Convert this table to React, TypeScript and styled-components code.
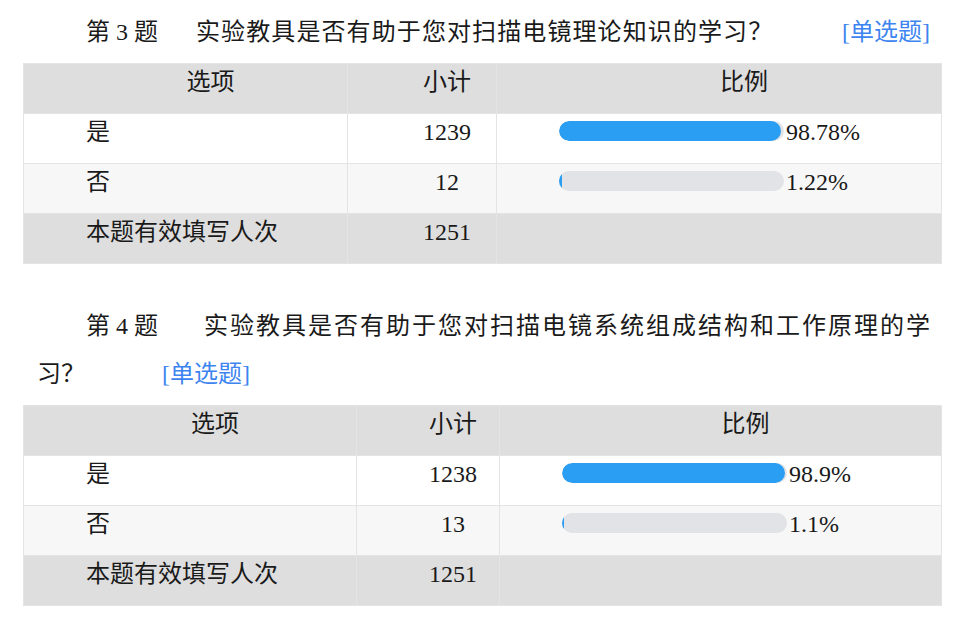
import React from 'react';
import styled, { createGlobalStyle } from 'styled-components';

const GlobalStyle = createGlobalStyle`
    body {
        margin: 0;
        background: #ffffff;
        color: #1a1a1a;
        font-family: "Liberation Serif", "Noto Sans CJK SC", serif;
    }
`

const Page = styled.div`
    width: 962px;
    padding: 8px 0 0 23px;
    box-sizing: border-box;
`
const Heading = styled.div`
    display: flex;
    align-items: center;
    width: 907px;
    padding-left: 63px;
    box-sizing: border-box;
    font-size: 24px;
    line-height: 48px;
`
const Label = styled.span<{ $w: number }>`
    width: ${props => props.$w}px;
    flex-shrink: 0;
`
const Question = styled.span`
    letter-spacing: 1.1px;
`
const Tag = styled.span<{ $gap?: number }>`
    color: #3d84f0;
    margin-left: ${props => props.$gap !== undefined ? `${props.$gap}px` : 'auto'};
`
const WrapHeading = styled.div`
    width: 907px;
    font-size: 24px;
    line-height: 48px;
`
const FirstLine = styled.div`
    display: flex;
    padding-left: 63px;
    white-space: nowrap;
`
const Justified = styled.span`
    flex: 1;
    text-align: justify;
    text-align-last: justify;
`
const SecondLine = styled.div`
    margin-left: 14px;
    display: flex;
`
const Table = styled.div<{ $cols: string }>`
    display: grid;
    grid-template-columns: ${props => props.$cols};
    grid-auto-rows: 49px;
    gap: 1px;
    width: 919px;
    box-sizing: border-box;
    margin: 7px 0 38px;
    background: #e4e4e4;
    border: 1px solid #e4e4e4;
    font-size: 24px;
`
const Cell = styled.div<{ $tone: 'head' | 'white' | 'light'; $align?: 'center' | 'left' }>`
    background: ${props => props.$tone === 'head' ? '#dedede' : props.$tone === 'light' ? '#f7f7f7' : '#ffffff'};
    padding: 3px 0 0 ${props => props.$align === 'left' ? '62px' : '50px'};
    text-align: ${props => props.$align === 'left' ? 'left' : 'center'};
    line-height: 30px;
    white-space: nowrap;
`
const BarCell = styled.div<{ $tone: 'white' | 'light' }>`
    background: ${props => props.$tone === 'light' ? '#f7f7f7' : '#ffffff'};
    display: flex;
    align-items: flex-start;
    padding: 3px 0 0 62px;
`
const Track = styled.div`
    width: 225px;
    height: 20px;
    margin-top: 4px;
    border-radius: 10px;
    background: #e2e3e6;
    overflow: hidden;
`
const Fill = styled.div`
    height: 100%;
    border-radius: 10px;
    background: #2a9ef2;
`
const Percent = styled.span`
    margin-left: 2px;
    line-height: 30px;
`

interface IOption {
    name: string,
    count: number,
    pct: string
}

function Result({ cols, options, total }: { cols: string, options: IOption[], total: number }) {
    return (
        <Table $cols={cols}>
            <Cell $tone="head">选项</Cell>
            <Cell $tone="head">小计</Cell>
            <Cell $tone="head">比例</Cell>
            {options.map((o, i) => {
                const tone = i % 2 === 0 ? 'white' : 'light'
                return (
                    <React.Fragment key={o.name}>
                        <Cell $tone={tone} $align="left">{o.name}</Cell>
                        <Cell $tone={tone}>{o.count}</Cell>
                        <BarCell $tone={tone}>
                            <Track><Fill style={{ width: `${parseFloat(o.pct)}%` }} /></Track>
                            <Percent>{o.pct}</Percent>
                        </BarCell>
                    </React.Fragment>
                )
            })}
            <Cell $tone="head" $align="left">本题有效填写人次</Cell>
            <Cell $tone="head">{total}</Cell>
            <Cell $tone="head" />
        </Table>
    )
}

export default function App() {
    return (
        <Page>
            <GlobalStyle />
            <Heading>
                <Label $w={110}>第 3 题</Label>
                <Question>实验教具是否有助于您对扫描电镜理论知识的学习？</Question>
                <Tag>[单选题]</Tag>
            </Heading>
            <Result
                cols="323px 148px 1fr"
                total={1251}
                options={[
                    { name: '是', count: 1239, pct: '98.78%' },
                    { name: '否', count: 12, pct: '1.22%' },
                ]}
            />
            <WrapHeading>
                <FirstLine>
                    <Label $w={118}>第 4 题</Label>
                    <Justified>实验教具是否有助于您对扫描电镜系统组成结构和工作原理的学</Justified>
                </FirstLine>
                <SecondLine>
                    <span>习？</span>
                    <Tag $gap={77}>[单选题]</Tag>
                </SecondLine>
            </WrapHeading>
            <Result
                cols="332px 142px 1fr"
                total={1251}
                options={[
                    { name: '是', count: 1238, pct: '98.9%' },
                    { name: '否', count: 13, pct: '1.1%' },
                ]}
            />
        </Page>
    )
}
